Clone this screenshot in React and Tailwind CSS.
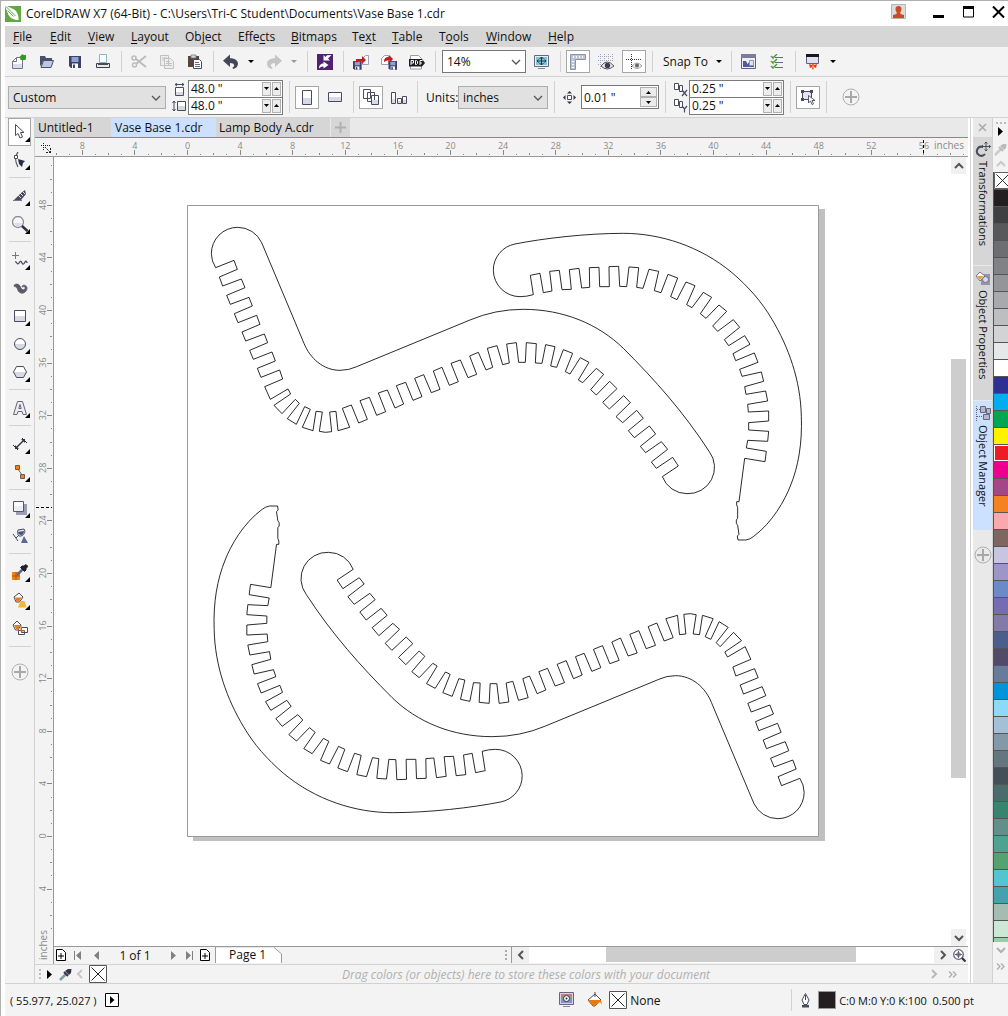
import React from "react";

const INK = "#4a4a60";

function Svg({ w = 16, h = 16, children, className = "" }) {
  return (
    <svg width={w} height={h} viewBox={`0 0 ${w} ${h}`} fill="none" aria-hidden="true" className={`shrink-0 ${className}`}>
      {children}
    </svg>
  );
}

/* ---------- small shared pieces ---------- */

const Divider = () => (
  <span className="flex w-2 shrink-0 justify-center self-stretch py-1">
    <span className="w-px bg-[#d2d2d2]" />
  </span>
);

const IconButton = ({ label, active, children }) => (
  <button
    type="button"
    aria-label={label}
    className={
      active
        ? "mx-[2px] flex h-[23px] w-6 shrink-0 items-center justify-center border border-[#a6a6a6] bg-white"
        : "flex h-[23px] w-7 shrink-0 items-center justify-center"
    }
  >
    {children}
  </button>
);

const CaretButton = ({ label, color = "#000" }) => (
  <button type="button" aria-label={label} className="flex h-[23px] w-[15px] shrink-0 items-center pl-[3px]">
    <Svg w={6} h={3}><path d="M0 0h6L3 3z" fill={color} /></Svg>
  </button>
);

const Chevron = ({ dir = "down", color = "#555", thick = 1.3 }) => {
  const d = { down: "M1 3l4 4 4-4", up: "M1 7l4-4 4 4", left: "M7 1L3 5l4 4", right: "M3 1l4 4-4 4" }[dir];
  return <Svg w={10} h={10}><path d={d} stroke={color} strokeWidth={thick} /></Svg>;
};

const DoubleChevron = () => (
  <Svg w={9} h={7}><path d="M1 .5l3 3-3 3M5 .5l3 3-3 3" stroke="#aaa" strokeWidth="1.200" /></Svg>
);

const PlusCircle = ({ size = 18 }) => (
  <svg width={size} height={size} viewBox="0 0 18 18" fill="none" aria-hidden="true">
    <circle cx="9" cy="9" r="8" stroke="#b0b0b0" />
    <path d="M9 3v12M3 9h12" stroke="#a8a8a8" strokeWidth="2" />
  </svg>
);

const Combo = ({ label, value, className, chevronColor }) => (
  <span className={`relative flex h-[23px] shrink-0 ${className}`}>
    <select aria-label={label} className="h-full w-full appearance-none bg-transparent pl-1 outline-none" defaultValue={value}>
      <option>{value}</option>
    </select>
    <span className="pointer-events-none absolute right-1 top-[6px]">
      <Chevron color={chevronColor} />
    </span>
  </span>
);

const SpinRow = ({ label, value }) => (
  <span className="flex h-4 items-center gap-px bg-white pr-px">
    <input aria-label={label} defaultValue={value} className="h-4 w-full min-w-0 flex-1 bg-transparent pl-[2px] outline-none" />
    <button type="button" aria-label={`${label} down`} className="flex h-[14px] w-[9px] items-center justify-center border border-[#b0b0b0] bg-[#ececec]">
      <Svg w={5} h={3}><path d="M0 0h5L2.500 3z" fill="#000" /></Svg>
    </button>
    <button type="button" aria-label={`${label} up`} className="flex h-[14px] w-[9px] items-center justify-center border border-[#b0b0b0] bg-[#ececec]">
      <Svg w={5} h={3}><path d="M0 3h5L2.500 0z" fill="#000" /></Svg>
    </button>
  </span>
);

const SpinPair = ({ labels, value }) => (
  <span className="flex w-[95px] shrink-0 flex-col border border-[#7a7a7a] bg-[#7a7a7a]">
    <SpinRow label={labels[0]} value={value} />
    <span className="h-px" />
    <SpinRow label={labels[1]} value={value} />
  </span>
);

/* ---------- title and menus ---------- */

function TitleBar() {
  return (
    <header className="flex h-[25px] shrink-0 items-center bg-white">
      <Svg>
        <path d="M0 0h16v16H0z" fill="#5fa944" />
        <path d="M0 0h2l8 4c2 2 4 6 3.500 10C9 14 5 12 3.500 9z" fill="#fff" />
        <path d="M1 .5l9.500 9.500M2.500 4.500l6 6" stroke="#5fa944" />
      </Svg>
      <h1 className="ml-[5px] flex-1 truncate text-[12px]">CorelDRAW X7 (64-Bit) - C:\Users\Tri-C Student\Documents\Vase Base 1.cdr</h1>
      <button type="button" aria-label="Account" className="mb-1 mr-[27px]">
        <Svg w={15} h={15}>
          <path d="M.5.5h14v14H.5z" fill="#dcdcdc" stroke="#b4b4b4" />
          <path d="M7.500 2c2 0 3 1.300 3 3 0 1.500-.6 2.500-1.200 3.200L9.500 10l3.500 1v3H2v-3l3.500-1 .2-1.800C5 7.500 4.500 6.500 4.500 5c0-1.700 1-3 3-3z" fill="#cc4a26" />
        </Svg>
      </button>
      <button type="button" aria-label="Minimize" className="mr-[18px]">
        <Svg w={12} h={12}><path d="M0 7h11v3H0z" fill="#000" /></Svg>
      </button>
      <button type="button" aria-label="Maximize" className="mb-[3px] mr-[17px]">
        <Svg w={12} h={12}><path d="M.5 1h10v10H.5z" stroke="#000" /><path d="M0 0h11v3H0z" fill="#000" /></Svg>
      </button>
      <button type="button" aria-label="Close" className="mb-[3px] mr-[3px]">
        <Svg w={13} h={12}><path d="M1 .5l11 11M12 .5l-11 11" stroke="#000" strokeWidth="2" /></Svg>
      </button>
    </header>
  );
}

const menus = [
  ["", "F", "ile", "w-[37px]"], ["", "E", "dit", "w-[38px]"], ["", "V", "iew", "w-[43px]"], ["", "L", "ayout", "w-[54px]"],
  ["Ob", "j", "ect", "w-[53px]"], ["Effe", "c", "ts", "w-[53px]"], ["", "B", "itmaps", "w-[61px]"], ["Te", "x", "t", "w-[40px]"],
  ["", "T", "able", "w-[47px]"], ["T", "o", "ols", "w-[47px]"], ["", "W", "indow", "w-[62px]"], ["", "H", "elp", "w-[40px]"],
];

const MenuBar = () => (
  <nav className="flex h-[21px] shrink-0 items-center bg-[#d6d6d6] pl-2">
    {menus.map(([a, u, b, w]) => (
      <button key={a + u + b} type="button" className={`shrink-0 text-left ${w}`}>
        {a}<span className="underline decoration-1 underline-offset-2">{u}</span>{b}
      </button>
    ))}
  </nav>
);

/* ---------- standard toolbar ---------- */

const DiskShape = ({ x = 0, y = 0, s = 1 }) => (
  <g transform={`translate(${x} ${y}) scale(${s})`}>
    <path d="M0 0h12v12H2l-2-2z" fill="#3a4068" />
    <path d="M2.500 1h7v5h-7z" fill="#8fa3cf" />
    <path d="M3 7.500h6V12H3z" fill="#fff" />
    <path d="M4 8.500h2V12H4z" fill="#3a4068" />
  </g>
);

function StandardBar() {
  return (
    <div role="toolbar" aria-label="Standard" className="flex h-[29px] shrink-0 items-center">
      <IconButton label="New">
        <Svg><path d="M1.500 7.500l4-4h6v11h-10z" fill="#fff" stroke="#74748a" /><path d="M2 10h9v4H2z" fill="#dcdce8" /><path d="M5.500 3.500v4h-4" stroke="#74748a" /><path d="M11 0l1.500 1.500L15 1v2.500L14.500 6l-2.500-.5L9.500 6V4L8 3l2-.8z" fill="#2f9a1c" /><circle cx="12" cy="3.500" r="2.700" fill="#2f9a1c" /></Svg>
      </IconButton>
      <IconButton label="Open">
        <Svg><path d="M1 2h5l1 2h6v3H4l-2 5-1-1z" fill="#4a4f6c" /><path d="M4.500 6.500h10l-2.500 7H2z" fill="#b9c9e0" stroke="#4a4f6c" /></Svg>
      </IconButton>
      <IconButton label="Save"><Svg><DiskShape x={2} y={2} /></Svg></IconButton>
      <IconButton label="Print">
        <Svg><path d="M4.500.5h7v8h-7z" fill="#f5ffff" stroke="#8fb5b8" /><path d="M1.500 9.500h13v4h-13z" fill="#e6ebe4" stroke="#3c3c50" /><path d="M3 9h10v2H3z" fill="#49495e" /></Svg>
      </IconButton>
      <Divider />
      <IconButton label="Cut">
        <Svg><path d="M15 2L5 10M15 13L5 5" stroke="#bcbcbc" strokeWidth="2" /><circle cx="3" cy="4" r="2" stroke="#bcbcbc" strokeWidth="1.500" /><circle cx="3.500" cy="11" r="2" stroke="#bcbcbc" strokeWidth="1.500" /></Svg>
      </IconButton>
      <IconButton label="Copy">
        <Svg><path d="M1.500 1.500h8v10h-8zM5.500 4.500h6l3 3v7h-9z" fill="#efefef" stroke="#c0c0c0" /><path d="M3 4h5M3 6h2M7 7.500h4M7 9.500h6M7 11.500h6" stroke="#c0c0c0" /></Svg>
      </IconButton>
      <IconButton label="Paste">
        <Svg><path d="M1 2h11v11H1z" fill="#54463c" /><path d="M4 1h5v3H4z" fill="#c9dcd8" stroke="#778" strokeWidth=".8" /><path d="M6.500 5.500h6l2 2v7h-8z" fill="#fff" stroke="#484860" /><path d="M8 8.500h4M8 10.500h5M8 12.500h5" stroke="#6a6a88" /></Svg>
      </IconButton>
      <Divider />
      <IconButton label="Undo">
        <Svg><path d="M7 .5v3.700c4-.2 8 2 8 5.300 0 3-2 5-5 5.500l-.5-1.500C12 12.500 12 9 7 9v4L0 6.800z" fill="#46465a" /></Svg>
      </IconButton>
      <CaretButton label="Undo history" />
      <IconButton label="Redo">
        <Svg><path d="M9 .5v3.700C5 4 1 6.200 1 9.500c0 3 2 5 5 5.500l.5-1.500C4 12.500 4 9 9 9v4l7-6.200z" fill="#c4c4c4" /></Svg>
      </IconButton>
      <CaretButton label="Redo history" color="#999" />
      <Divider />
      <IconButton label="Corel Connect">
        <Svg><path d="M0 0h16v16H0z" fill="#4f2370" /><path d="M14.500 1L11 4.500l2 2H6.500V1l2 2L10 1.200z" fill="#fff" /><path d="M2 14.500C2 11 4 9.500 6.500 9.500V7.500l5 3.500-5 3.500v-2C4.500 12.500 3.500 13 2 14.500z" fill="#fff" /></Svg>
      </IconButton>
      <Divider />
      <IconButton label="Import">
        <Svg><path d="M9.500 4.500l3-3h3v9h-6z" fill="#fff" stroke="#9ca0b0" /><DiskShape x={0} y={7} s={0.720} /><path d="M3 5h6V2l4 4-4 4V7H5L3 9z" fill="#c81a1a" /></Svg>
      </IconButton>
      <IconButton label="Export">
        <Svg><path d="M.5 4.500l3-3h4v9h-7z" fill="#fff" stroke="#9ca0b0" /><DiskShape x={7.500} y={7} s={0.720} /><path d="M3 8c0-4 2-5 5-5V1l4 4-3.500 4V6.500C6 6.500 5 6.500 3 8z" fill="#c81a1a" /></Svg>
      </IconButton>
      <IconButton label="Publish to PDF">
        <Svg><path d="M1.500 15V1.500h8l3 3V15z" fill="#fff" stroke="#9a9aaa" /><path d="M0 5h13l3 4-3 3.500H0z" fill="#1c1c22" /><path d="M2 11V6.500h2.500V9H2M6.500 6.500v4h1l1-1v-2l-1-1zM11 11V6.500h2.500M11 9h2" stroke="#fff" /></Svg>
      </IconButton>
      <Divider />
      <Combo label="Zoom level" value="14%" className="ml-[3px] mr-[2px] w-[84px] border border-[#777] bg-white" chevronColor="#555" />
      <IconButton label="Full screen preview">
        <Svg><path d="M.5 1.500h14v11H.5z" fill="#e8eef2" stroke="#68687c" /><path d="M2 3h11v8H2z" fill="#7fc5d8" /><path d="M7.500 3v8M3 7h9M5.500 5l2-2 2 2M5.500 9l2 2 2-2M4.500 5.500L3 7l1.500 1.500M10.500 5.500L12 7l-1.500 1.500" stroke="#24344c" /><path d="M4 14.500h7" stroke="#88889a" /></Svg>
      </IconButton>
      <Divider />
      <IconButton label="Show rulers" active>
        <Svg><path d="M.5.500h15v5h-10v10h-5z" fill="#bcc5d6" stroke="#8a93a8" /><path d="M3.500 2v2M6.500 2v2M9.500 2v2M12.500 2v2M2 7.500h2M2 10.500h2M2 13.500h2" stroke="#fff" /></Svg>
      </IconButton>
      <IconButton label="Show grid">
        <Svg><path d="M2.500 0v16M6.500 0v16M10.500 0v8M14.500 0v8M0 2.500h16M0 6.500h16M0 10.500h6" stroke="#a4a4bc" strokeDasharray="1 1" /><path d="M3 12q6-8 13 0-7 6-13 0z" fill="#e8e8ee" stroke="#555" /><circle cx="9.500" cy="11.500" r="2.700" fill="#3d3d50" /></Svg>
      </IconButton>
      <IconButton label="Show guidelines" active>
        <Svg><path d="M5.500 0v16M0 5.500h16" stroke="#333" strokeDasharray="1 1" /><path d="M6 12q5-6 10 0-5 5-10 0z" fill="#eee" stroke="#aaa" /><circle cx="11" cy="11.500" r="2" fill="#666" /></Svg>
      </IconButton>
      <Divider />
      <button type="button" className="flex h-[23px] w-[71px] shrink-0 items-center justify-between pl-[7px] pr-[5px]">
        Snap To
        <Svg w={6} h={3}><path d="M0 0h6L3 3z" fill="#000" /></Svg>
      </button>
      <Divider />
      <IconButton label="Welcome screen">
        <Svg><path d="M.5.500h14v14H.5z" fill="#eef0f6" stroke="#60607c" /><path d="M0 0h15v4H0z" fill="#7c7c98" /><path d="M2 7h3l1.500 3L9 7h4v6H2z" fill="#4d5c93" /><path d="M8.500 6.500h4v5h-4z" fill="#dfe4ef" stroke="#8c96b4" /></Svg>
      </IconButton>
      <IconButton label="Options">
        <Svg><path d="M6 3.500h8M6 8.500h8M6 13.500h8" stroke="#68688c" /><path d="M2 2l2 2 4-4M2 7l2 2 4-4M2 12l2 2 4-4" stroke="#3d9a28" strokeWidth="1.300" /><path d="M1.500 2.500h3v3M1.500 7.500h3v3M1.500 12.500h3v2.500" stroke="#99a" strokeWidth=".7" /></Svg>
      </IconButton>
      <Divider />
      <IconButton label="Application launcher">
        <Svg><path d="M1.500.5h12v9h-12z" fill="#dfe2ee" stroke="#60607c" /><path d="M1 0h13v3H1z" fill="#16161c" /><path d="M4 10l3 1 1-2 1 2 3-1-1 4-1.500-1L8 16l-1.500-3L5 14z" fill="#e4361c" /><path d="M7 12l1-1 1 1v2l-1 1z" fill="#ffb13c" /></Svg>
      </IconButton>
      <CaretButton label="Launcher list" />
    </div>
  );
}

/* ---------- property bar ---------- */

const DuplicateIcon = ({ axis }) => (
  <Svg w={16} h={15}>
    <path d="M1.500 1.500h4v6h-4zM6.500 3.500h3v6h-3z" fill="#fff" stroke={INK} />
    {axis === "X" ? <path d="M9 8l5 6M14 8l-5 6" stroke={INK} strokeWidth="1.200" /> : <path d="M9 8l2.500 3L14 8M11.500 11v3.500" stroke={INK} strokeWidth="1.200" />}
  </Svg>
);

const PropertyBar = () => (
  <div role="toolbar" aria-label="Properties" className="flex h-[42px] shrink-0 items-center border-y border-[#d2d2d2] pl-[3px]">
    <Combo label="Page size" value="Custom" className="w-[158px] border border-[#adadad] bg-[#e1e1e1]" />
    <span className="flex w-[22px] shrink-0 flex-col items-end gap-1 pr-[2px]">
      <Svg w={14} h={13}><path d="M3.500 4.500h8v8h-8z" fill="#fff" stroke={INK} /><path d="M4 9h7v3H4z" fill="#d6d6e4" /><path d="M3 1.500h9M5 0L3 1.500 5 3M10 0l2 1.500L10 3" stroke={INK} /></Svg>
      <Svg w={14} h={12}><path d="M5.500 1.500h8v9h-8z" fill="#fff" stroke={INK} /><path d="M6 6h7v4H6z" fill="#d6d6e4" /><path d="M2 1v10M.5 3L2 1l1.500 2M.5 9L2 11l1.500-2" stroke={INK} /></Svg>
    </span>
    <SpinPair labels={["Page width", "Page height"]} value={'48.0 "'} />
    <span className="w-[2px] shrink-0" />
    <Divider />
    <IconButton label="Portrait" active><Svg w={10} h={15}><path d="M.5.5h9v14h-9z" fill="#fff" stroke={INK} /><path d="M1 8h8v6H1z" fill="#d8d8e6" /></Svg></IconButton>
    <IconButton label="Landscape"><Svg w={14} h={10}><path d="M.5.5h13v9H.5z" fill="#fff" stroke={INK} /><path d="M1 5h12v4H1z" fill="#d8d8e6" /></Svg></IconButton>
    <Divider />
    <IconButton label="All pages" active>
      <Svg><path d="M.5.500h7v9h-7zM4.500 3.500h7v9h-7zM8.500 6.500h7v9h-7z" fill="#fff" stroke={INK} /><path d="M9 11h6v4H9z" fill="#d8d8e6" /></Svg>
    </IconButton>
    <IconButton label="Current page">
      <Svg><path d="M.5 3.500h4v11h-4zM6.500 9.500h4v5h-4zM11.500 7.500h4v7h-4z" fill="#fff" stroke={INK} /><path d="M1 10h3v4H1zM7 12h3v2H7zM12 11h3v3h-3z" fill="#d8d8e6" /></Svg>
    </IconButton>
    <Divider />
    <label className="ml-[5px] flex shrink-0 items-center">
      <span className="w-8">Units:</span>
      <Combo label="Units" value="inches" className="w-[90px] border border-[#adadad] bg-[#e1e1e1]" />
    </label>
    <span className="w-[2px] shrink-0" />
    <Divider />
    <span className="flex w-[23px] shrink-0 justify-center">
      <Svg w={13} h={13}><path d="M4.500 4.500h4v4h-4z" fill="#fff" stroke={INK} /><path d="M6.500 0L9 2.500H4zM6.500 13L9 10.500H4zM0 6.500L2.500 4v5zM13 6.500L10.500 4v5z" fill="#333348" /></Svg>
    </span>
    <span className="flex h-6 w-[78px] shrink-0 items-center border border-[#777] bg-white pr-px">
      <input aria-label="Nudge distance" defaultValue={'0.01 "'} className="w-full min-w-0 flex-1 bg-transparent pl-[2px] outline-none" />
      <span className="flex w-[17px] flex-col">
        <button type="button" aria-label="Increase nudge" className="flex h-[10px] items-center justify-center border border-[#b0b0b0] bg-[#ececec]"><Svg w={5} h={3}><path d="M0 3h5L2.500 0z" fill="#000" /></Svg></button>
        <button type="button" aria-label="Decrease nudge" className="flex h-[10px] items-center justify-center border border-[#b0b0b0] bg-[#ececec]"><Svg w={5} h={3}><path d="M0 0h5L2.500 3z" fill="#000" /></Svg></button>
      </span>
    </span>
    <span className="w-[2px] shrink-0" />
    <Divider />
    <span className="flex w-5 shrink-0 flex-col items-end gap-px"><DuplicateIcon axis="X" /><DuplicateIcon axis="Y" /></span>
    <SpinPair labels={["Duplicate distance X", "Duplicate distance Y"]} value={'0.25 "'} />
    <span className="w-[2px] shrink-0" />
    <Divider />
    <IconButton label="Treat as filled" active>
      <Svg><path d="M2.500 2.500h9v8h-9z" fill="#e4e4ee" stroke={INK} /><path d="M1 1h3v3H1zM10 1h3v3h-3zM1 9h3v3H1z" fill={INK} /><path d="M8.500 6.500v7.500l2-2 1.500 3.500 1.500-.7-1.500-3.300h3z" fill="#fff" stroke={INK} strokeWidth=".9" /></Svg>
    </IconButton>
    <Divider />
    <button type="button" aria-label="Customize" className="ml-3 shrink-0"><PlusCircle /></button>
  </div>
);

/* ---------- toolbox ---------- */

const toolbox = [
  ["Pick", <Svg><path d="M3.500.5v11l2.500-2 2 4.500 2.500-1-2-4.500h3.500z" fill="#fff" stroke={INK} /></Svg>, true],
  ["Shape", <Svg><path d="M6 0C3 4 3 10 6 15" stroke={INK} strokeWidth="1.200" /><path d="M2.500 3.500h3v3h-3z" fill="#fff" stroke={INK} /><path d="M6 7l7 2-2 2-1 4-3-3z" fill="#2c2c40" /></Svg>, true],
  null,
  ["Crop", <Svg><path d="M2 12l7-7 4-3 1 4-5 6z" fill="#4a4a5c" /><path d="M8 5l3 3M10 3l3 3M6 7l3 3" stroke="#e0e0e6" /><path d="M1 12.500h9" stroke="#77778a" /></Svg>, true],
  ["Zoom", <Svg><circle cx="6" cy="6" r="5.500" fill="#f8f8fc" stroke="#8a8a98" strokeWidth="1.300" /><path d="M2 7h8L8 10H4z" fill="#dcdce8" /><path d="M10 10l5.500 5" stroke="#33333f" strokeWidth="2.600" /></Svg>, true],
  null,
  ["Freehand", <Svg><path d="M3.500 0v7M0 3.500h7" stroke="#777788" /><path d="M3 10c2-1 2 4 4 1s2-2 3 0 2 1 3-1 2 0 2 1" stroke="#4a4a60" strokeWidth="1.300" /></Svg>, true],
  ["Artistic media", <Svg><path d="M2 6c0-2 4-3 6 0 1 3 3 5 5 3 1-2-1-3-3-2 0-3 5-2 5 1s-3 6-6 5S6 10 5 8 3 7.500 2 6z" fill="#5a5a68" stroke="#5a5a68" strokeWidth=".8" /></Svg>, false],
  ["Rectangle", <Svg><path d="M2.500 2.500h11v11h-11z" fill="#fff" stroke={INK} /><path d="M3 8h10v5H3z" fill="#d9d9e6" /></Svg>, true],
  ["Ellipse", <Svg><circle cx="8" cy="8" r="5.500" fill="#fff" /><path d="M2.500 8h11a5.500 5.500 0 01-11 0z" fill="#d9d9e6" /><circle cx="8" cy="8" r="5.500" stroke={INK} /></Svg>, true],
  ["Polygon", <Svg><path d="M4.500 2.500h7l3 5.500-3 5.500h-7L1.500 8z" fill="#fff" /><path d="M1.500 8h13l-3 5.500h-7z" fill="#d9d9e6" /><path d="M4.500 2.500h7l3 5.500-3 5.500h-7L1.500 8z" stroke={INK} /></Svg>, true],
  null,
  ["Text", <Svg><path d="M5.500 1.500h5l4 13h-3.500l-1-3H6l-1 3H1.500z" fill="#ececf2" stroke="#666678" /><path d="M8 4.500l1.200 4H6.800z" fill="#fff" stroke="#666678" /></Svg>, true],
  null,
  ["Dimension", <Svg><path d="M4 12L12 4" stroke="#33333f" strokeWidth="1.500" /><path d="M1 9l5 5M10 2l5 5" stroke="#33333f" /><path d="M3 9v4h4zM13 7V3H9z" fill="#33333f" /></Svg>, true],
  ["Connector", <Svg><path d="M5 4l6 8" stroke="#667" /><path d="M3.500 1.500h4v4h-4zM8.500 10.500h4v4h-4z" fill="#f28119" stroke="#6b5b5b" /></Svg>, true],
  null,
  ["Drop shadow", <Svg><path d="M4 4h11v11H4z" fill="#9c9cb2" /><path d="M1.500 1.500h10v10h-10z" fill="#fff" stroke="#55556c" /><path d="M2 6h9v5H2z" fill="#ededf4" /></Svg>, true],
  ["Transparency", <Svg><path d="M6 2l6-1c2 3 0 6-3 7S5 5 6 2z" fill="#dfe4ee" stroke={INK} /><path d="M6 4l6-1c0 3-2 4-3 4s-3-1-3-3z" fill="#3f5678" /><path d="M7 7l-3 3M1 6l5 7" stroke={INK} /><path d="M12 8l4 7H9z" fill="#5a6a90" /></Svg>, false],
  null,
  ["Color eyedropper", <Svg><path d="M0 8h8v8H0z" fill="#f08018" /><path d="M4 8v8M0 12h8" stroke="#b55208" /><path d="M5 11l6-6" stroke="#66667c" strokeWidth="2.500" /><path d="M8.500 3.500l4 4 1.500-1.500V4l2-1.500L14 .5 12 2h-2z" fill="#22222e" stroke="#22222e" /></Svg>, true],
  ["Interactive fill", <Svg><path d="M2 5l5-4 4 4-3.500 5H4z" fill="#fff" stroke={INK} /><path d="M3 5.500h7L7 9.500H4.500z" fill="#e87c1c" /><path d="M8.500 9h4l2 6.500H6z" fill="#f0b73a" /></Svg>, true],
  ["Smart fill", <Svg><path d="M1 5l4-4 4 4-3 5H3.500z" fill="#fff" stroke={INK} /><path d="M2 5h7L6 9H4z" fill="#e87c1c" /><path d="M9.500 7.500h6v5h-6zM6.500 10.500h6v4h-6z" stroke={INK} fill="#fff" /><path d="M9 5.500v5.500h4" stroke="#e87c1c" strokeWidth="1.200" /></Svg>, false],
];

const Toolbox = () => (
  <div role="toolbar" aria-label="Toolbox" className="flex w-[30px] shrink-0 flex-col items-center border-r border-[#d2d2d2] bg-[#f3f3f3]">
    {toolbox.map((t, i) =>
      t === null ? (
        <span key={i} className="mb-1 mt-[3px] h-px w-[22px] shrink-0 bg-[#d2d2d2]" />
      ) : (
        <button
          key={i}
          type="button"
          aria-label={t[0]}
          className={`relative flex h-7 w-[23px] shrink-0 items-center justify-center ${i === 0 ? "bg-white outline-1 -outline-offset-1 outline-[#a6a6a6]" : ""}`}
        >
          {t[1]}
          {t[2] && <span className="absolute bottom-1 right-px"><Svg w={5} h={5}><path d="M5 0v5H0z" fill="#000" /></Svg></span>}
        </button>
      )
    )}
    <span className="my-1 h-px w-[22px] shrink-0 bg-[#d2d2d2]" />
    <button type="button" aria-label="Customize toolbox" className="mt-3"><PlusCircle /></button>
  </div>
);

/* ---------- rulers ---------- */

const INCH = 13.15;
const range = (a, b) => Array.from({ length: b - a + 1 }, (_, i) => a + i);

const HorizontalRuler = () => (
  <div className="relative h-[19px] overflow-hidden border-b border-[#999] bg-[#f3f3f3]">
    <svg width="933" height="18" viewBox="35 138 933 18" className="absolute left-0 top-0" role="img" aria-label="Horizontal ruler">
      <path d="M41 145.500h9M43.500 143v8" stroke="#222" strokeDasharray="1 1" />
      <path d="M45 147l5 5M50.500 148v5M46 152.500h4" stroke="#222" strokeDasharray="2 1" />
      {range(-10, 59).map((n) => {
        const x = Math.round(187.5 + n * INCH - 0.5);
        const h = n % 4 === 0 ? 5 : n % 2 === 0 ? 2 : 1;
        return <rect key={n} x={x} y={155 - h} width="1" height={h} fill="#888" />;
      })}
      {range(-2, 14).map((k) => (
        <text key={k} x={187.5 + k * 4 * INCH} y="149" textAnchor="middle" fontSize="9" fill="#8a8a8a">{Math.abs(k * 4)}</text>
      ))}
      <path d="M923.500 140v15" stroke="#000" strokeDasharray="3 2" />
    </svg>
    <span className="absolute right-1 top-0 text-[10px] leading-[15px] text-[#8a8a8a]">inches</span>
  </div>
);

const VerticalRuler = () => (
  <div className="relative w-[19px] shrink-0 overflow-hidden border-r border-[#999] bg-[#f3f3f3]">
    <svg width="18" height="806" viewBox="35 157 18 806" className="absolute left-0 top-0" role="img" aria-label="Vertical ruler">
      {range(-7, 51).map((n) => {
        const y = Math.round(836 - n * INCH);
        const w = n % 4 === 0 ? 5 : n % 2 === 0 ? 2 : 1;
        return <rect key={n} x={52 - w} y={y} width={w} height="1" fill="#888" />;
      })}
      {range(-1, 12).map((k) => {
        const y = 836 - k * 4 * INCH;
        return <text key={k} x="46" y={y} textAnchor="middle" transform={`rotate(-90 46 ${y})`} fontSize="9" fill="#8a8a8a">{Math.abs(k * 4)}</text>;
      })}
      <path d="M36 507.500h16" stroke="#000" strokeDasharray="3 2" />
      <text x="47" y="960" transform="rotate(-90 47 960)" fontSize="10" fill="#8a8a8a">inches</text>
    </svg>
  </div>
);

/* ---------- drawing ---------- */

const WAVE =
  "M107 203A79 79 0 0 1 94 161A79 79 0 0 1 173 82A79 79 0 0 1 245 128L372 430C390 475 430 511 480 511Q507 511 530 500L870 360Q945 328 1030 328C1150 328 1255 372 1330 445C1425 540 1510 635 1588 755A79 79 0 0 1 1521 881A79 79 0 0 1 1447 830" +
  "L1495 798L1478 772L1429 805L1414 786L1463 748L1444 725L1397 758L1381 739L1427 702L1408 678L1363 713L1345 692L1390 655L1370 631L1328 668L1308 650L1351 608L1331 587L1288 627L1268 607L1311 566L1289 544L1249 585L1232 569L1271 523L1249 505L1208 548L1195 540L1227 487L1201 473L1170 522L1156 515L1178 460L1150 449L1130 502L1112 498L1125 440L1097 434L1086 490L1066 489L1069 431L1039 428L1036 487L1016 487L1009 428L980 432L988 489L968 494L951 437L922 445L938 502L918 510L895 457L869 468L890 523L864 533L841 480L813 490L835 545L808 556L786 502L760 513L780 568L754 578L731 524L704 535L726 590L699 601L677 547L649 557L671 612L645 624L622 570L595 579L617 635L590 646L568 592L540 602L562 658L536 669L514 615L487 625L509 682L474 692L468 634L449 636L455 695L436 697L418 694L427 636L408 634L399 692L367 682L391 628L374 620L349 673L322 656L358 610L346 598L306 641L282 616L332 582L324 567L271 598L254 560L308 537L299 510L243 532L232 505L286 483L276 456L220 478L209 451L263 428L253 402L197 423L186 396L240 373L230 346L174 368L163 341L217 318L207 292L151 313L140 286L195 263L184 237L128 258L118 231L172 208L162 181Z";

const CRESCENT =
  "M160 284L151 226L180 220L190 278L216 273L209 214L238 211L246 269L274 268L268 209L297 205L305 264L329 262L328 203L357 202L359 260L388 260L387 200L416 199L419 259L440 260L447 201L476 203L470 262L489 265L507 208L536 214L523 272L543 278L564 223L593 234L572 290L591 299L618 246L645 257L620 314L636 323L670 277L695 292L661 341L678 355L717 315L740 334L698 378L713 394L760 359L779 382L733 419L746 437L794 407L810 433L759 461L767 482L823 459L834 487L779 508L786 529L844 516L851 544L794 560L798 583L857 573L863 603L803 613L805 636L866 633L866 663L806 668L806 690L866 694L863 724L803 721L799 744L859 754L855 785L794 775L777 905L770 905L770 915L773 922L773 955L769 960L769 970L773 976L777 1003L772 1008L774 1020L798 1020" +
  "Q810 1018 820 1010C877 968 915 900 931 858C955 800 967 730 964 650C962 540 925 440 876 358C845 305 805 260 756 218C660 138 540 100 430 100C320 100 190 115 105 132A80 80 0 0 0 40 211A80 80 0 0 0 120 290Q140 290 160 284Z";

const Pieces = () => (
  <g stroke="#000" strokeWidth="2.500" fill="none">
    <path d={WAVE} transform="translate(180 200) scale(.33333)" />
    <path d={CRESCENT} transform="translate(480 200) scale(.33333)" />
  </g>
);

const Drawing = () => (
  <svg width="897" height="790" viewBox="54 157 897 790" className="absolute left-0 top-0" role="img" aria-label="Vase base cutting layout">
    <path d="M193 209h632v632H193z" fill="#c0c0c0" />
    <path d="M187.500 205.500h631v631h-631z" fill="#fff" stroke="#999" />
    <Pieces />
    <g transform="rotate(180 507.750 523)"><Pieces /></g>
  </svg>
);

/* ---------- document area ---------- */

const Tabs = () => (
  <div role="tablist" className="flex h-5 shrink-0 border-b border-[#18aee8] bg-[#e9e9e9]">
    <button type="button" role="tab" className="w-[76px] bg-[#d6d6d6] pl-[3px] text-left">Untitled-1</button>
    <button type="button" role="tab" aria-selected="true" className="w-[105px] bg-[#cce0ff] pl-1 text-left">Vase Base 1.cdr</button>
    <button type="button" role="tab" className="w-[114px] bg-[#d6d6d6] pl-[3px] text-left">Lamp Body A.cdr</button>
    <button type="button" aria-label="New document" className="ml-px flex w-[19px] items-center justify-center bg-[#d6d6d6]">
      <Svg w={11} h={11}><path d="M5.500 0v11M0 5.500h11" stroke="#b0b0b0" strokeWidth="2" /></Svg>
    </button>
  </div>
);

const AddPage = ({ label }) => (
  <button type="button" aria-label={label} className="shrink-0">
    <Svg w={10} h={12}><path d="M.5.5h6l3 3v8h-9z" fill="#fff" stroke="#000" /><path d="M5 4v6M2 7h6" stroke="#000" /></Svg>
  </button>
);

const Arrow = ({ label, d, className = "" }) => (
  <button type="button" aria-label={label} className={`shrink-0 ${className}`}><Svg w={9} h={9}><path d={d} fill="#808080" /></Svg></button>
);

const PageBar = () => (
  <div className="flex h-[18px] shrink-0 border-t border-[#999] bg-[#f3f3f3] pb-px">
    <div className="flex min-w-0 flex-1 items-center border-r border-[#999] pl-[2px]">
      <AddPage label="Add page before" />
      <Arrow label="First page" className="ml-2" d="M0 0h1v9H0zM7 0v9L2 4.500z" />
      <Arrow label="Previous page" className="ml-[10px]" d="M6 0v9L1 4.500z" />
      <span className="w-[66px] shrink-0 pt-px text-center">1 of 1</span>
      <Arrow label="Next page" className="ml-[2px]" d="M1 0v9l5-4.500z" />
      <Arrow label="Last page" className="ml-[6px]" d="M7 0h1v9H7zM1 0v9l5-4.500z" />
      <span className="w-[6px] shrink-0" />
      <AddPage label="Add page after" />
      <button type="button" className="relative ml-[5px] h-4 w-[67px] shrink-0 text-left leading-[14px]">
        <svg width="67" height="16" viewBox="0 0 67 16" className="absolute left-0 top-0" aria-hidden="true"><path d="M.5 16V0h58l8 7v9" fill="#fff" stroke="#999" /><path d="M1 0h58" stroke="#fff" /></svg>
        <span className="relative pl-[14px]">Page 1</span>
      </button>
      <span className="ml-auto mr-1"><Svg w={2} h={11}><path d="M1 0v11" stroke="#aaa" strokeWidth="2" strokeDasharray="2 2" /></Svg></span>
    </div>
    <div className="flex w-[439px] shrink-0 items-stretch bg-white">
      <button type="button" aria-label="Scroll left" className="flex w-[17px] items-center justify-center bg-[#f0f0f0]"><Chevron dir="left" thick={2} /></button>
      <span className="flex flex-1 pl-[77px]"><span className="h-[15px] w-[250px] bg-[#cdcdcd]" /></span>
      <button type="button" aria-label="Scroll right" className="flex w-[17px] items-center justify-center bg-[#f0f0f0]"><Chevron dir="right" thick={2} /></button>
    </div>
    <button type="button" aria-label="Navigator" className="flex w-[17px] shrink-0 items-center justify-center">
      <Svg w={13} h={13}><circle cx="5.500" cy="5.500" r="4.800" fill="#fff" stroke="#66667a" strokeWidth="1.300" /><path d="M9 9l3.500 3.500" stroke="#33333f" strokeWidth="2.200" /><path d="M5.500 2v7M2 5.500h7M4 4h3v3H4z" stroke="#66667a" /></Svg>
    </button>
  </div>
);

const Eyedropper = ({ color = "#33334a", tip = "#7fa0a0" }) => (
  <Svg w={13} h={13}><path d="M1 12l6-6" stroke={tip} strokeWidth="2.500" /><path d="M6 3l4 4 2-2 .5-4L9 1z" fill={color} /><path d="M5 4l4 4" stroke={color} strokeWidth="2" /></Svg>
);

const XBox = ({ size = 18 }) => (
  <svg width={size} height={size} viewBox="0 0 18 18" aria-hidden="true" className="shrink-0"><path d="M.5.500h17v17H.5z" fill="#fff" stroke="#555" /><path d="M2.500 2.500l13 13M15.500 2.500l-13 13" stroke="#222" /></svg>
);

const DocumentPalette = () => (
  <div className="flex h-[19px] shrink-0 items-center border-t border-[#d2d2d2] bg-[#f3f3f3] pl-1">
    <Svg w={2} h={11}><path d="M1 0v11" stroke="#bbb" strokeWidth="2" strokeDasharray="2 2" /></Svg>
    <button type="button" aria-label="Palette menu" className="ml-[6px]"><Svg w={5} h={9}><path d="M0 0v9l5-4.500z" fill="#000" /></Svg></button>
    <button type="button" aria-label="Pick palette color" className="ml-[7px]"><Eyedropper /></button>
    <button type="button" aria-label="Previous colors" className="ml-[3px]"><Chevron dir="left" color="#c8c8c8" thick={2} /></button>
    <button type="button" aria-label="No color" className="ml-1"><XBox /></button>
    <span className="flex-1 pl-4 text-center italic text-[#b0b0b0]">Drag colors (or objects) here to store these colors with your document</span>
    <button type="button" aria-label="Next colors" className="mr-[9px]"><Chevron dir="right" color="#b8b8b8" thick={2} /></button>
    <button type="button" aria-label="Expand palette" className="mr-[11px]"><DoubleChevron /></button>
  </div>
);

const DocumentArea = () => (
  <main className="flex min-w-0 flex-1 flex-col">
    <Tabs />
    <HorizontalRuler />
    <div className="flex min-h-0 flex-1">
      <VerticalRuler />
      <div className="flex min-w-0 flex-1 flex-col">
        <div className="flex min-h-0 flex-1 bg-white">
          <div className="relative min-w-0 flex-1 overflow-hidden"><Drawing /></div>
          <div className="mr-[2px] flex w-[15px] shrink-0 flex-col">
            <button type="button" aria-label="Scroll up" className="flex h-[17px] items-center justify-center bg-[#f0f0f0]"><Chevron dir="up" thick={2} /></button>
            <span className="flex flex-1 flex-col pt-[185px]"><span className="h-[419px] bg-[#cdcdcd]" /></span>
            <button type="button" aria-label="Scroll down" className="flex h-[17px] items-center justify-center bg-[#f0f0f0]"><Chevron dir="down" thick={2} /></button>
          </div>
        </div>
        <PageBar />
      </div>
    </div>
    <DocumentPalette />
  </main>
);

/* ---------- dockers and palette ---------- */

const dockers = [
  ["Transformations", "h-[128px] bg-[#d6d6d6]", <Svg><path d="M8 6a4.500 4.500 0 10 2 7" stroke="#4a4a5c" strokeWidth="2" /><path d="M11 1v9M6.500 5.500h9M9.500 2.500L11 1l1.500 1.500M9.500 8.500L11 10l1.500-1.500M8 4L6.500 5.500 8 7M14 4l1.500 1.500L14 7" stroke="#4a4a5c" /></Svg>],
  ["Object Properties", "h-[134px] bg-[#d6d6d6]", <Svg><path d="M6 4h9v11H6z" fill="#9494ac" /><circle cx="10.500" cy="9.500" r="3" fill="#d8d8e6" stroke="#707088" /><path d="M1 6l4-4 5 4-5 5z" fill="#fff" stroke="#778" /><path d="M2 6h7l-4 4z" fill="#e6a040" /></Svg>],
  ["Object Manager", "h-[129px] bg-[#cce0ff]", <Svg><path d="M1.500 1v15M2 4.500h3M2 11.500h6" stroke="#667" strokeDasharray="1 1" /><path d="M5.500 1.500h5v6h-5zM11.500 3.500h4v5h-4zM8.500 9.500h6v5h-6z" fill="#b4b8cc" stroke="#66667c" /></Svg>],
];

const Dockers = () => (
  <aside className="flex shrink-0 bg-white pl-[2px]">
    <span className="mr-[2px] w-px bg-[#d2d2d2]" />
    <div className="flex w-[20px] flex-col items-center gap-px border-r border-[#d2d2d2] bg-[#e9e9e9]">
      <button type="button" aria-label="Close docker" className="flex h-[18px] items-center"><Svg w={9} h={9}><path d="M1 1l7 7M8 1l-7 7" stroke="#aaa" strokeWidth="1.500" /></Svg></button>
      {dockers.map(([name, cls, icon]) => (
        <button key={name} type="button" className={`flex w-full shrink-0 flex-col items-center pt-1 ${cls}`}>
          {icon}
          <span className="mt-1 text-[11px] leading-[18px] [writing-mode:vertical-rl]">{name}</span>
        </button>
      ))}
      <button type="button" aria-label="Add docker" className="mt-[15px]"><PlusCircle /></button>
    </div>
  </aside>
);

const swatches = [
  "#231f20", "#3f4041", "#58595b", "#6d6e71", "#808285", "#939598", "#a7a9ac", "#bcbec0", "#d1d3d4", "#e6e7e8", "#ffffff", "#2e3192",
  "#00aeef", "#00a651", "#fff200", "#ed1c24", "#ec008c", "#a54686", "#f58220", "#f8a9ad", "#7f675f", "#c7c5e2", "#9e96c8", "#6b8bc8",
  "#766cb3", "#837aa8", "#4a5f8b", "#524a69", "#677b9b", "#0095da", "#8ed8f8", "#a3c1d4", "#8299a8", "#647780", "#445058", "#486d6a",
  "#38846f", "#618f8a", "#4da390", "#54a272", "#52c5d0", "#43a2ab", "#a3beb1", "#cce7d6", "#97cfab",
];

const ColorPalette = () => (
  <aside className="flex min-h-0 w-[15px] shrink-0 flex-col overflow-hidden bg-[#f3f3f3]">
    <div className="flex h-[54px] shrink-0 flex-col items-center gap-[3px] pt-1">
      <Svg w={10} h={2}><path d="M0 1h10" stroke="#bbb" strokeWidth="2" strokeDasharray="2 2" /></Svg>
      <button type="button" aria-label="Color palette menu"><Svg w={5} h={9} className="mb-1"><path d="M0 0v9l5-4.500z" fill="#000" /></Svg></button>
      <button type="button" aria-label="Palette eyedropper"><Eyedropper color="#bbb" tip="#ccc" /></button>
      <button type="button" aria-label="Scroll palette up"><Chevron dir="up" color="#c8c8c8" thick={2} /></button>
    </div>
    <div className="flex min-h-0 flex-1 flex-col overflow-hidden border-l border-[#555]">
      <button type="button" aria-label="No color" className="h-[17px] w-[17px] shrink-0 bg-white"><XBox size={17} /></button>
      {swatches.map((c) => (
        <button
          key={c}
          type="button"
          aria-label={`Color ${c}`}
          className={`h-[17px] w-[17px] shrink-0 border-t border-[#555] ${c === "#ed1c24" ? "ring-1 ring-inset ring-white" : ""}`}
          style={{ backgroundColor: c }}
        />
      ))}
    </div>
    <div className="flex h-[41px] shrink-0 flex-col items-center gap-2 pt-[3px]">
      <button type="button" aria-label="Scroll palette down"><Chevron color="#b0b0b0" thick={2} /></button>
      <button type="button" aria-label="Expand color palette"><DoubleChevron /></button>
    </div>
  </aside>
);

/* ---------- status bar ---------- */

const StatusBar = () => (
  <footer className="flex h-[33px] shrink-0 items-center border-t border-[#d2d2d2] bg-[#f3f3f3] pl-[5px] pr-[34px]">
    <span className="w-[95px] shrink-0 text-[11px]">( 55.977, 25.027 )</span>
    <button type="button" aria-label="Cursor details"><Svg w={14} h={14}><path d="M.5.500h13v13H.5z" fill="#fff" stroke="#000" /><path d="M5 3v8l4.500-4z" fill="#000" /></Svg></button>
    <span className="flex-1" />
    <button type="button" aria-label="Color proofing"><Svg><path d="M.5.500h14v12H.5z" fill="#d4d4e0" stroke="#66667c" /><path d="M2 2h11v4H2z" fill="#c48080" /><path d="M2 6h11v5H2z" fill="#7d95c4" /><circle cx="7.500" cy="6.500" r="3" fill="#fff" stroke="#333" /><circle cx="7.500" cy="6.500" r="1" fill="#222" /><path d="M4 14.500h7" stroke="#889" /></Svg></button>
    <button type="button" aria-label="Fill" className="ml-3"><Svg><path d="M1 8l7-6 6 6-6 6H6z" fill="#fff" stroke={INK} /><path d="M1 8h13l1 5-2-3-5 4H6z" fill="#e87a10" /><path d="M8 0v5" stroke={INK} /></Svg></button>
    <span className="ml-[6px]"><XBox /></span>
    <span className="ml-[3px] w-[161px]">None</span>
    <span className="h-[22px] w-px bg-[#d2d2d2]" />
    <button type="button" aria-label="Outline" className="ml-[9px]"><Svg w={9} h={15}><path d="M4.500.5L1 7l2 4.500h3L8 7z" fill="#fff" stroke={INK} /><path d="M4.500 2v5" stroke={INK} /><path d="M1 12h7v2.500H1z" fill={INK} /></Svg></button>
    <span className="ml-2 h-[18px] w-[18px] border border-[#999] bg-[#231f20]" />
    <span className="ml-[3px] whitespace-pre text-[11px]">C:0 M:0 Y:0 K:100  0.500 pt</span>
  </footer>
);

export default function App() {
  return (
    <div className="flex h-screen min-h-[600px] flex-col overflow-hidden border-l border-t border-[#b0b0b0] bg-white pl-1 font-['Open_Sans','Noto_Sans',sans-serif] text-[12px] leading-[15px] text-[#111]">
      <TitleBar />
      <MenuBar />
      <div className="bg-[#f3f3f3]">
        <StandardBar />
        <PropertyBar />
      </div>
      <div className="flex min-h-0 flex-1">
        <Toolbox />
        <DocumentArea />
        <Dockers />
        <ColorPalette />
      </div>
      <StatusBar />
    </div>
  );
}
